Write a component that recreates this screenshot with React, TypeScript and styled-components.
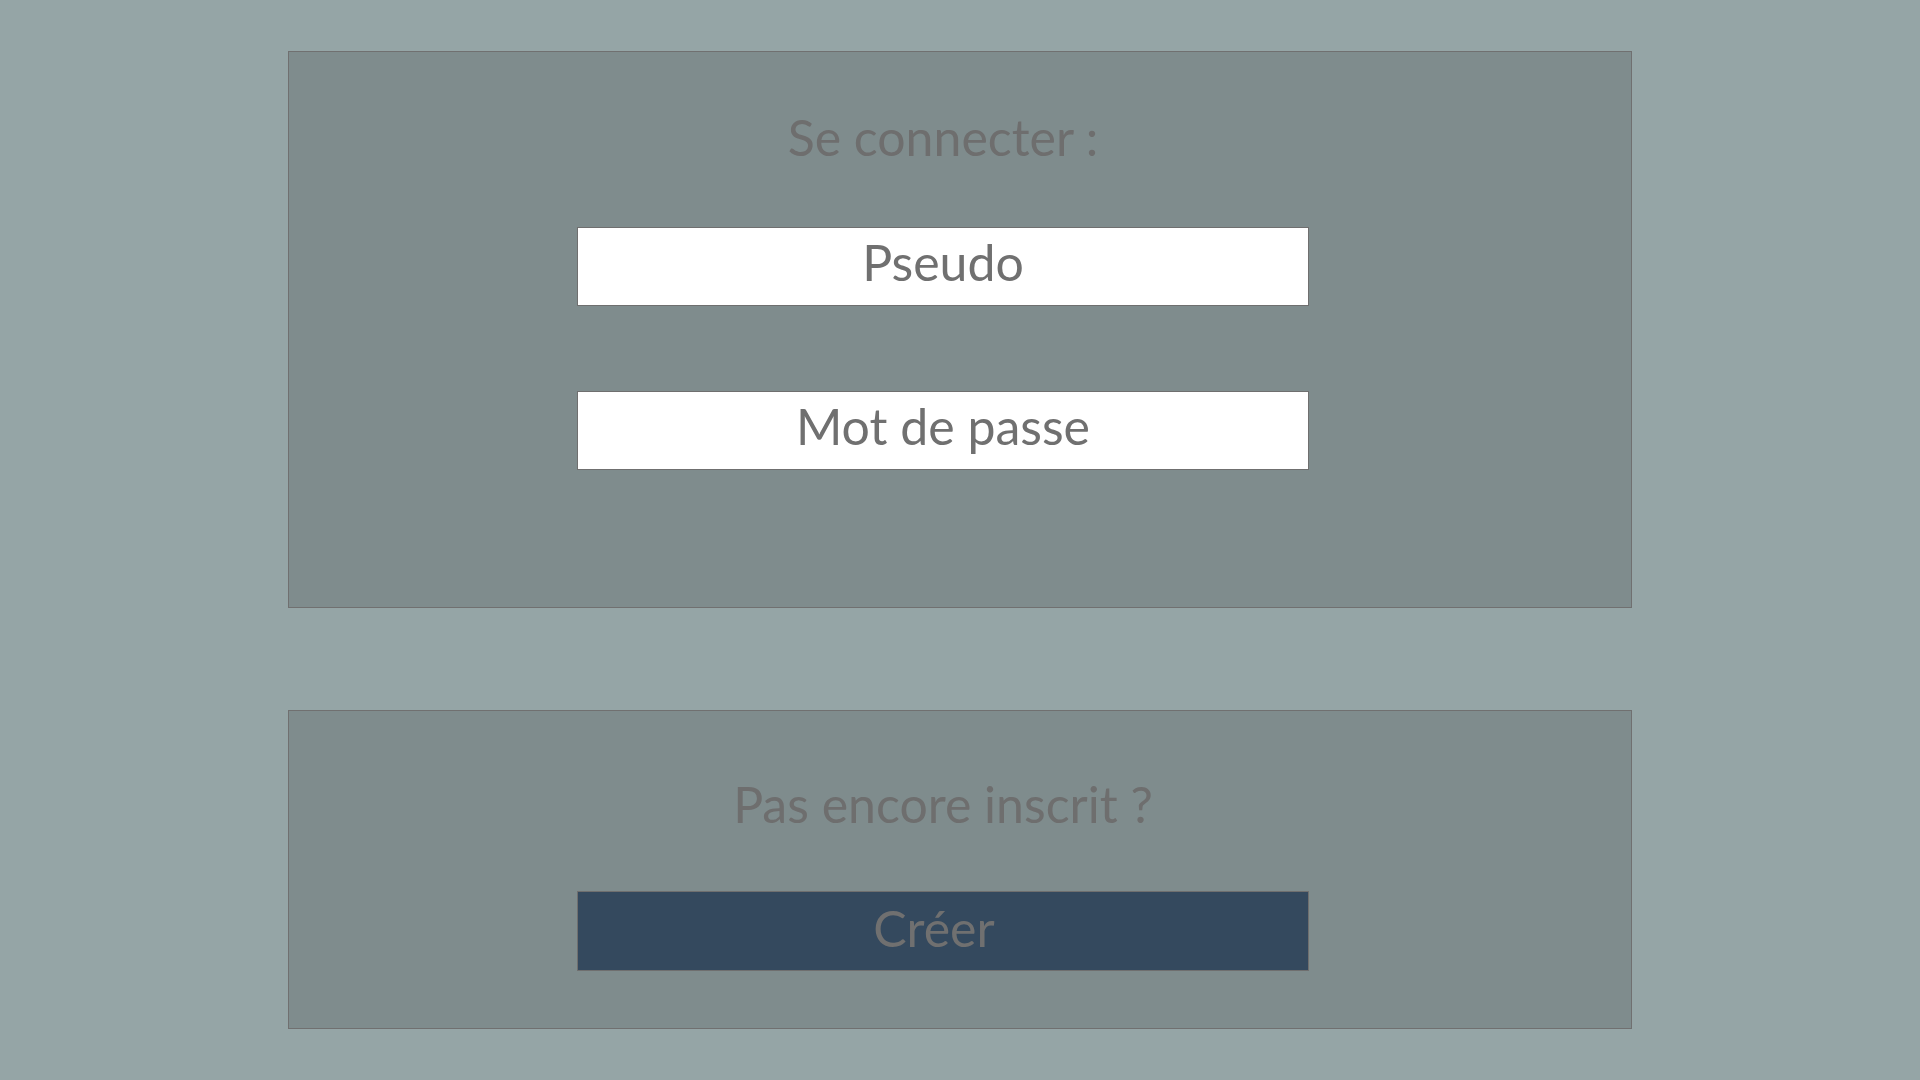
import React from "react";
import styled, { createGlobalStyle } from "styled-components";

const GlobalStyle = createGlobalStyle`
  html, body {
    margin: 0;
    padding: 0;
    background: #95a5a6;
    font-family: Lato, "Open Sans", sans-serif;
  }
  * { box-sizing: border-box; }
`;

const Page = styled.main`
  display: flex;
  flex-direction: column;
  align-items: center;
  padding-top: 51px;
  gap: 102px;
  min-height: 100vh;
`;

const Panel = styled.section<{ $top: number; $bottom: number }>`
  width: 1344px;
  background: #7f8c8d;
  border: 1px solid #707070;
  display: flex;
  flex-direction: column;
  align-items: center;
  padding: ${(p) => p.$top}px 34px ${(p) => p.$bottom}px 0;
`;

const Title = styled.h2<{ $gap: number }>`
  margin: 0 0 ${(p) => p.$gap}px;
  font-size: 50px;
  line-height: 60px;
  font-weight: 400;
  color: #6e6e6e;
`;

const Field = styled.input`
  width: 732px;
  height: 79px;
  background: #ffffff;
  border: 1px solid #6f6f6f;
  border-radius: 0;
  font-family: inherit;
  font-size: 50px;
  text-align: center;
  color: #707070;
  outline: none;
  padding: 0 0 10px;
  & + & { margin-top: 85px; }
  &::placeholder { color: #707070; opacity: 1; }
`;

const CreateButton = styled.button`
  width: 732px;
  height: 80px;
  background: #34495e;
  border: 1px solid #6f6f6f;
  font-family: inherit;
  font-size: 50px;
  color: #707070;
  padding: 0 18px 6px 0;
  cursor: pointer;
`;

export default function App() {
  return (
    <>
      <GlobalStyle />
      <Page>
        <Panel $top={55} $bottom={137}>
          <Title $gap={60}>Se connecter :</Title>
          <Field type="text" placeholder="Pseudo" />
          <Field type="password" placeholder="Mot de passe" />
        </Panel>
        <Panel $top={63} $bottom={57}>
          <Title $gap={57}>Pas encore inscrit ?</Title>
          <CreateButton>Créer</CreateButton>
        </Panel>
      </Page>
    </>
  );
}
